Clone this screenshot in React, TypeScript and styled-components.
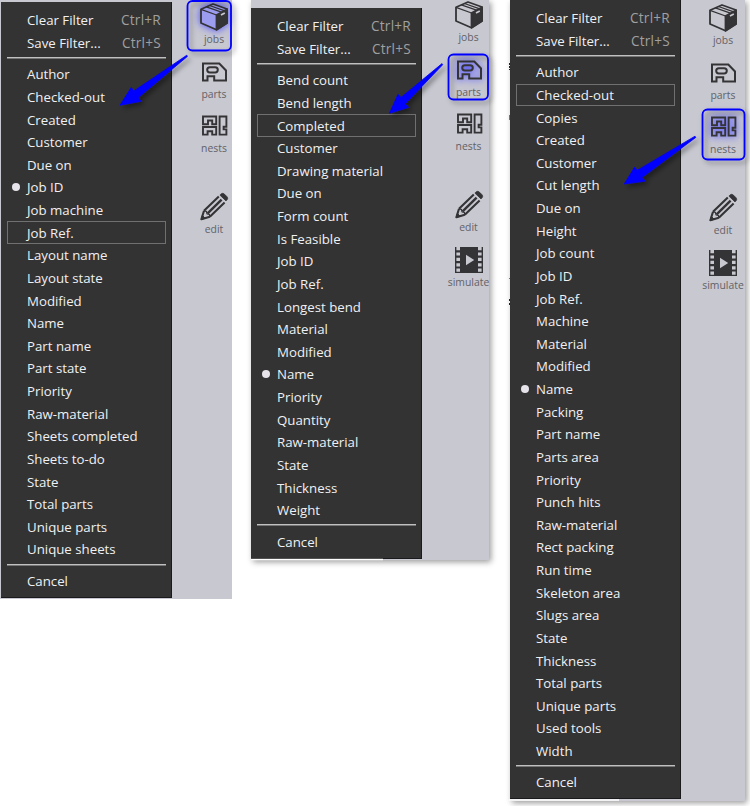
import React from "react";
import styled, { createGlobalStyle } from "styled-components";

const Global = createGlobalStyle`
  body { margin: 0; background: #fff; overflow: hidden; }
  * { box-sizing: border-box; }
`;

const Page = styled.main`
  position: relative;
  display: flex;
  align-items: flex-start;
  width: 750px;
  height: 806px;
  background: #fff;
  overflow: hidden;
  font-family: "Open Sans", "Noto Sans", sans-serif;
`;

const Panel = styled.section<{ $w: number; $h: number; $left: number; $shadow?: boolean }>`
  flex: none;
  display: flex;
  align-items: flex-start;
  width: ${(p) => p.$w}px;
  height: ${(p) => p.$h}px;
  margin-left: ${(p) => p.$left}px;
  background: #c8c8d1;
  box-shadow: ${(p) => (p.$shadow ? "2px 2px 6px rgba(0,0,0,.4)" : "none")};
`;

const Menu = styled.nav<{ $top: number; $left: number; $h: number; $w: number }>`
  flex: none;
  width: ${(p) => p.$w}px;
  height: ${(p) => p.$h}px;
  margin: ${(p) => p.$top}px 0 0 ${(p) => p.$left}px;
  padding: 7.1px 5px 0 6px;
  background: #333;
  border-right: 1px solid #1a1a1c;
  border-bottom: 1px solid #1a1a1c;
`;

const Item = styled.div<{ $focus?: boolean }>`
  display: flex;
  align-items: center;
  width: 159px;
  height: 22.64px;
  padding-right: 5px;
  color: #f0f0f2;
  font-size: 13.25px;
  line-height: 20px;
  white-space: pre;
  box-shadow: ${(p) => (p.$focus ? "inset 0 0 0 1px #707070" : "none")};
`;

const Mark = styled.span<{ $on?: boolean }>`
  flex: none;
  width: 8px;
  height: 8px;
  margin: 0 7px 0 5px;
  border-radius: 50%;
  background: ${(p) => (p.$on ? "#e6e3ea" : "transparent")};
`;

const Name = styled.span`
  flex: 1;
`;

const Shortcut = styled.span`
  color: #a0a0a0;
  font-size: 13.6px;
  letter-spacing: 0.25px;
`;

const Rule = styled.div`
  width: 159px;
  height: 2px;
  margin: 2.8px 0 3.9px;
  border-top: 1px solid #c0c0c0;
  border-bottom: 1px solid #757575;
`;

const Tools = styled.aside<{ $top: number; $left: number }>`
  flex: none;
  display: flex;
  flex-direction: column;
  width: 50px;
  margin: ${(p) => p.$top}px 0 0 ${(p) => p.$left}px;
`;

const Tool = styled.div<{ $gap?: boolean }>`
  display: flex;
  flex-direction: column;
  align-items: center;
  height: 54.5px;
  margin-top: ${(p) => (p.$gap ? "26.8px" : "0")};
`;

const Glyph = styled.svg<{ $active?: boolean }>`
  flex: none;
  display: block;
  width: 30px;
  height: 30px;
  filter: ${(p) => (p.$active ? "drop-shadow(0 0 3px rgba(80,80,255,.7)) drop-shadow(0 0 5px rgba(90,90,255,.5))" : "none")};
`;

const Caption = styled.span`
  color: #626267;
  font-size: 10.4px;
  line-height: 14px;
  white-space: nowrap;
`;

const Overlay = styled.svg`
  position: absolute;
  inset: 0;
  width: 750px;
  height: 806px;
  pointer-events: none;
`;

const INK = "#343436";

type ToolName = "jobs" | "parts" | "nests" | "edit" | "simulate";

function Drawing({ name, active }: { name: ToolName; active?: boolean }) {
  const tint = active ? "#9c9cf0" : "none";
  switch (name) {
    case "jobs":
      return (
        <g stroke={INK} strokeWidth="1.8" strokeLinejoin="round" fill={tint}>
          <path d="M2 7.3 14 2 28 7 28 21 17.5 27.8 2 21Z" />
          <path d="M17.5 13 28 7.2V21L17.5 27.8Z" fill={INK} />
          <path d="M2 7.3 17.5 13M7.3 4.8 22.5 10.1M10.5 3.5 25 8.7" fill="none" strokeWidth="1.3" />
          <path d="M22 13 25.8 10.9" stroke="#c8c8d1" strokeWidth="1.7" />
        </g>
      );
    case "parts":
      return (
        <g fill="none" stroke={INK} strokeWidth="2">
          <path d="M4 6.5H20.3L27 13.5V23.4H15.2V19.2H8.5V23.4H4Z" />
          <rect x="8.2" y="10.2" width="10.6" height="5.3" rx="2.65" fill={active ? "#7272ee" : "none"} />
        </g>
      );
    case "nests":
      return (
        <g fill="none" stroke={INK} strokeWidth="1.9">
          <path d="M4 5.5H17.2V13.2H13.2V9.5H9V13.2H4Z" />
          <path d="M4 16H17.2V23.6H13.2V20.2H8.6V23.6H4Z" />
          <path d="M20.6 5.5H27.4V15.8H24.6V18.4H27.4V23.6H20.6Z" />
        </g>
      );
    case "edit":
      return (
        <g fill="none" stroke={INK} strokeWidth="2.1" strokeLinejoin="round">
          <path d="M5 18.8 2.4 27.2 10.8 24.8" />
          <path d="M5 18.8 19.8 4.4M10.8 24.8 25.6 10.4" />
          <path d="M8.6 21.4 22.6 7.6" strokeWidth="2.4" />
          <path d="M5 18.8 7.4 19.4 8 21.8 10.4 22.4 10.8 24.8" strokeWidth="1.2" />
          <path d="M21.6 2.4C23 1 24.3 1 25.6 2.3L27.8 4.5C29 5.7 29 6.8 27.7 8.2L27 8.9 20.9 3.1Z" fill={INK} strokeWidth=".8" />
          <path d="M2.2 27.4 3.3 23.4 6.3 26.3Z" fill={INK} strokeWidth="1" />
        </g>
      );
    case "simulate":
      return (
        <>
          <path d="M1 2H29V28H1Z" fill={INK} />
          <path d="M12 9.8 20.2 15 12 20.2Z" fill="#c8c8d1" />
          {[2, 7.4, 12.8, 18.2, 23.6].map((y) => (
            <path key={y} d={`M2.4 ${y}h3.6v3.2H2.4ZM24 ${y}h3.6v3.2H24Z`} fill="#c8c8d1" />
          ))}
        </>
      );
  }
}

function ToolBar({ top, left, active, simulate }: { top: number; left: number; active: ToolName; simulate?: boolean }) {
  const names: ToolName[] = ["jobs", "parts", "nests", "edit"];
  if (simulate) names.push("simulate");
  return (
    <Tools $top={top} $left={left}>
      {names.map((n) => (
        <Tool key={n} $gap={n === "edit"}>
          <Glyph viewBox="0 0 30 30" $active={n === active}>
            <Drawing name={n} active={n === active} />
          </Glyph>
          <Caption>{n}</Caption>
        </Tool>
      ))}
    </Tools>
  );
}

interface MenuProps {
  top: number;
  left: number;
  height: number;
  width: number;
  items: string[];
  checked: string;
  focused: string;
}

function SortMenu({ top, left, height, width, items, checked, focused }: MenuProps) {
  return (
    <Menu $top={top} $left={left} $h={height} $w={width}>
      <Item><Mark /><Name>Clear Filter</Name><Shortcut>Ctrl+R</Shortcut></Item>
      <Item><Mark /><Name>Save Filter...</Name><Shortcut>Ctrl+S</Shortcut></Item>
      <Rule />
      {items.map((label) => (
        <Item key={label} $focus={label === focused}>
          <Mark $on={label === checked} />
          <Name>{label}</Name>
        </Item>
      ))}
      <Rule />
      <Item><Mark /><Name>Cancel</Name></Item>
    </Menu>
  );
}

const jobFields = ["Author", "Checked-out", "Created", "Customer", "Due on", "Job ID", "Job machine", "Job Ref.", "Layout name", "Layout state", "Modified", "Name", "Part name", "Part state", "Priority", "Raw-material", "Sheets completed", "Sheets to-do", "State", "Total parts", "Unique parts", "Unique sheets"];
const partFields = ["Bend count", "Bend length", "Completed", "Customer", "Drawing material", "Due on", "Form count", "Is Feasible", "Job ID", "Job Ref.", "Longest bend", "Material", "Modified", "Name", "Priority", "Quantity", "Raw-material", "State", "Thickness", "Weight"];
const nestFields = ["Author", "Checked-out", "Copies", "Created", "Customer", "Cut length", "Due on", "Height", "Job count", "Job ID", "Job Ref.", "Machine", "Material", "Modified", "Name", "Packing", "Part name", "Parts area", "Priority", "Punch hits", "Raw-material", "Rect packing", "Run time", "Skeleton area", "Slugs area", "State", "Thickness", "Total parts", "Unique parts", "Used tools", "Width"];

export default function App() {
  return (
    <Page>
      <Global />
      <Panel $w={232} $h={599} $left={0}>
        <SortMenu top={2} left={1} height={596} width={171} items={jobFields} checked="Job ID" focused="Job Ref." />
        <ToolBar top={2} left={17} active="jobs" />
      </Panel>
      <Panel $w={238} $h={560} $left={19} $shadow>
        <SortMenu top={8} left={0} height={551} width={171} items={partFields} checked="Name" focused="Completed" />
        <ToolBar top={0} left={21.5} active="parts" simulate />
      </Panel>
      <Panel $w={235} $h={801} $left={21} $shadow>
        <SortMenu top={0} left={0} height={799} width={171} items={nestFields} checked="Name" focused="Checked-out" />
        <ToolBar top={3} left={17} active="nests" simulate />
      </Panel>
      <Overlay viewBox="0 0 750 806">
        <defs>
          <filter id="cast" x="-20%" y="-20%" width="150%" height="150%">
            <feDropShadow dx="3" dy="3" stdDeviation="2.5" floodOpacity=".4" />
          </filter>
        </defs>
        <path d="M251 559.5H383M509 800H619" stroke="#fff" strokeWidth="1.5" />
        <path d="M509.5 63v2M509.5 66v2M509.5 69v1M509.5 299v2M509.5 303v2" stroke="#222" />
        <path d="M509.5 115v5M509.5 278v1" stroke="#3a83b5" />
        <g filter="url(#cast)">
          <g fill="none" stroke="#0000ff" strokeWidth="1.8">
            <rect x="187.5" y="1" width="43.5" height="49.5" rx="5" />
            <rect x="448.5" y="54.5" width="39.5" height="45" rx="5" />
            <rect x="702.5" y="109.5" width="42" height="50" rx="5" />
          </g>
          <g fill="#0000ff" stroke="#0000ff" strokeWidth=".8" strokeLinejoin="round">
            <path d="M120 105.2 131.2 87.5 133.8 91 186.8 55.2 187.4 56.4 138 97.8 141 101.2Z" />
            <path d="M389.5 113.2 398 94.3 401 97.4 442 63.6 442.6 64.8 405 104 408.5 107.3Z" />
            <path d="M624.2 184 634.7 167 637 170.4 695 136.2 695.8 137.4 641.5 177.8 645.5 181Z" />
          </g>
        </g>
      </Overlay>
    </Page>
  );
}
